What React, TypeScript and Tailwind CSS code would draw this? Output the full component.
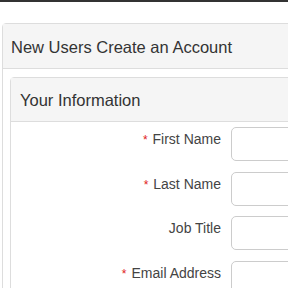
import * as React from "react";

const fields = [
  { label: "First Name", required: true },
  { label: "Last Name", required: true },
  { label: "Job Title", required: false },
  { label: "Email Address", required: true },
];

export default function App() {
  return (
    <div
      className="w-[288px] h-[288px] overflow-hidden bg-white text-[#333]"
      style={{ fontFamily: '"Liberation Sans", Arial, sans-serif' }}
    >
      <div className="h-[2px] bg-[#333]" />
      <div className="ml-[2px] mt-[21px] w-[600px] border border-[#ddd] rounded-[4px]">
        <div className="h-[45px] flex items-center px-[8px] pt-[2px] bg-[#f5f5f5] border-b border-[#ddd]">
          <h3 className="text-[16.5px]">New Users Create an Account</h3>
        </div>
        <div className="pl-[7px] pt-[8px]">
          <div className="border border-[#ddd] rounded-[4px]">
            <div className="h-[44px] flex items-center px-[9px] pt-[2px] bg-[#f5f5f5] border-b border-[#ddd]">
              <h4 className="text-[16.5px]">Your Information</h4>
            </div>
            <div className="pt-[5px] flex flex-col gap-[10.7px]">
              {fields.map((f) => (
                <div key={f.label} className="flex gap-[10px]">
                  <label className="w-[210px] text-right text-[14px] pt-[2px] text-[#444]">
                    {f.required && (
                      <span className="text-[#e02020] mr-[5px] text-[12px]">*</span>
                    )}
                    {f.label}
                  </label>
                  <input
                    type="text"
                    className="w-[200px] h-[34px] border border-[#ccc] rounded-[5px] outline-none"
                  />
                </div>
              ))}
            </div>
          </div>
        </div>
      </div>
    </div>
  );
}
